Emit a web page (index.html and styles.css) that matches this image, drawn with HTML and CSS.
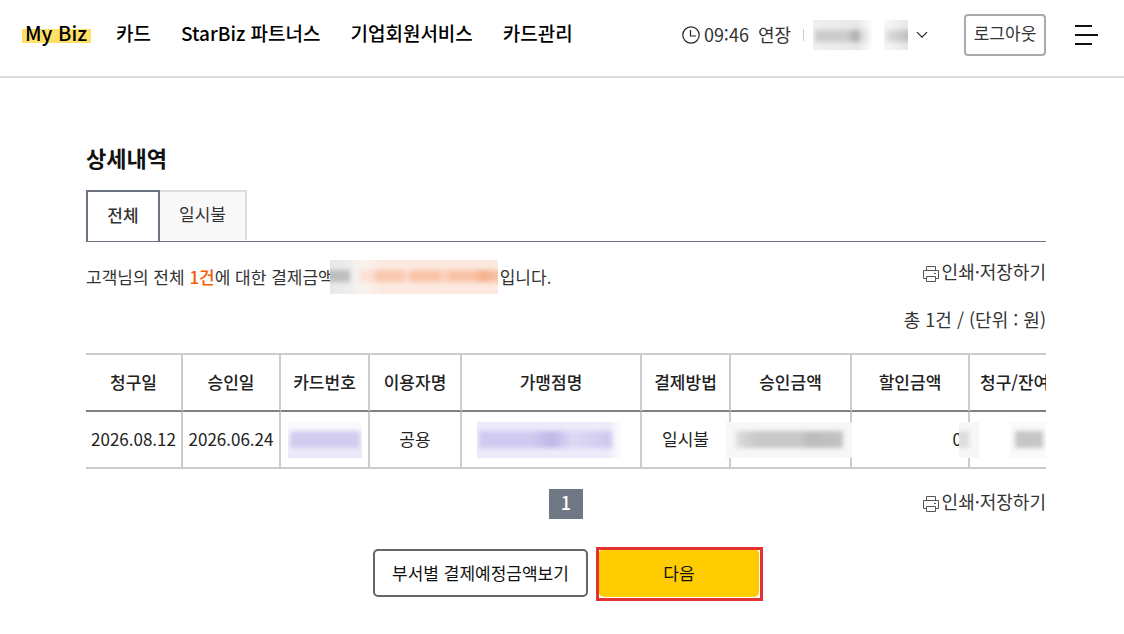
FILE: index.html
```html
<!DOCTYPE html>
<html lang="ko">
<head>
<meta charset="utf-8">
<meta name="viewport" content="width=device-width, initial-scale=1">
<title>상세내역</title>
<link rel="stylesheet" href="styles.css">
</head>
<body>
<header class="header">
  <nav class="nav">
    <a class="nav-link nav-current" href="#">My Biz</a>
    <a class="nav-link" href="#">카드</a>
    <a class="nav-link" href="#">StarBiz 파트너스</a>
    <a class="nav-link" href="#">기업회원서비스</a>
    <a class="nav-link" href="#">카드관리</a>
  </nav>
  <div class="session">
    <svg class="clock" width="18" height="18" viewBox="0 0 18 18" fill="none" stroke="#222" stroke-width="1.2"><circle cx="9" cy="9" r="8.2"/><path d="M8.5 4v6H14"/></svg>
    <span class="time">09:46</span>
    <button class="extend" type="button">연장</button>
    <button class="user" type="button" aria-label="사용자">
      <span class="mask mask-user"><span class="band"></span></span>
      <span class="mask mask-suffix"><span class="band"></span></span>
      <svg width="12" height="8" viewBox="0 0 12 8" fill="none" stroke="#222" stroke-width="1.2"><path d="M1 1.2l5 5 5-5"/></svg>
    </button>
  </div>
  <button class="logout" type="button">로그아웃</button>
  <button class="menu" type="button" aria-label="전체메뉴"><svg width="24" height="22" viewBox="0 0 24 22" stroke="#111" stroke-width="2"><path d="M0 2h17M0 11h23M0 20h17"/></svg></button>
</header>
<main class="main">
  <h2 class="title">상세내역</h2>
  <div class="tabs">
    <button class="tab tab-active" type="button">전체</button>
    <button class="tab" type="button">일시불</button>
  </div>
  <div class="summary">
    <p class="message">고객님의 전체 <strong class="count">1건</strong>에 대한 결제금액<span class="mask mask-amount"><span class="band band-gray"></span><span class="band band-orange"></span></span>입니다.</p>
    <div class="tools">
      <a class="print" href="#"><svg width="18" height="18" viewBox="0 0 18 18" fill="none" stroke="#555"><path d="M4.5 5.5v-4h9v4M4.5 13.500h-3v-8h15v8h-3M4.500 11.500h9v5h-9zM12 8.500h2"/></svg>인쇄·저장하기</a>
      <p class="total">총 1건 / (단위 : 원)</p>
    </div>
  </div>
  <div class="table-wrap">
    <table class="table">
      <colgroup><col class="c-bill"><col class="c-date"><col class="c-card"><col class="c-user"><col class="c-shop"><col class="c-method"><col class="c-amount"><col class="c-sale"><col class="c-rest"></colgroup>
      <thead>
        <tr><th>청구일</th><th>승인일</th><th>카드번호</th><th>이용자명</th><th>가맹점명</th><th>결제방법</th><th>승인금액</th><th>할인금액</th><th class="rest">청구/잔여</th></tr>
      </thead>
      <tbody>
        <tr>
          <td>2026.08.12</td><td>2026.06.24</td>
          <td><span class="mask mask-card"><span class="band"></span></span></td>
          <td>공용</td>
          <td><span class="mask mask-shop"><span class="band"></span></span></td>
          <td>일시불</td>
          <td><span class="mask mask-paid"><span class="band"></span></span></td>
          <td class="num">0<span class="mask mask-sale"><span class="band"></span></span></td>
          <td><span class="mask mask-rest"><span class="band"></span></span></td>
        </tr>
      </tbody>
    </table>
  </div>
  <div class="foot">
    <button class="page" type="button" aria-current="page">1</button>
    <a class="print" href="#"><svg width="18" height="18" viewBox="0 0 18 18" fill="none" stroke="#555"><path d="M4.5 5.5v-4h9v4M4.5 13.500h-3v-8h15v8h-3M4.500 11.500h9v5h-9zM12 8.500h2"/></svg>인쇄·저장하기</a>
  </div>
  <div class="actions">
    <button class="btn" type="button">부서별 결제예정금액보기</button>
    <button class="btn btn-next" type="button">다음</button>
  </div>
</main>
</body>
</html>
```
FILE: styles.css
```css
* { box-sizing: border-box; }
body {
  margin: 0;
  background: #fff;
  color: #333;
  font: 17px/24px "Noto Sans CJK KR", sans-serif;
}
button { padding: 0; border: 0; background: none; color: inherit; font: inherit; }
a { color: inherit; text-decoration: none; }
p, h2 { margin: 0; }
svg { display: block; flex: none; }

.header {
  display: flex;
  align-items: flex-start;
  height: 78px;
  padding: 14px 25px 0 22px;
  border-bottom: 2px solid #ddd;
}
.nav { display: flex; gap: 30px; padding-top: 5px; margin-right: auto; white-space: nowrap; }
.nav-link { color: #000; font-size: 19px; line-height: 28px; font-weight: 500; }
.nav-current {
  padding: 0 4px 0 3px;
  margin-right: -5px;
  background: linear-gradient(#ffe066, #ffe066) 0 10px / 100% 14px no-repeat;
  font-size: 20px;
}
.session { display: flex; align-items: center; height: 42px; font-size: 18px; }
.time, .extend { padding-bottom: 3px; }
.time { margin: 0 9px 0 4px; }
.user { display: flex; align-items: center; height: 30px; margin-left: 12px; }
.user::before { content: ""; width: 1px; height: 12px; margin-right: 9px; background: #ccc; }
.logout {
  width: 82px;
  height: 42px;
  margin-left: 36px;
  padding-bottom: 4px;
  border: 2px solid #aaa;
  border-radius: 4px;
}
.menu { margin: 10px 0 0 29px; }

/* Privacy masks */
.mask { position: relative; display: inline-block; overflow: hidden; }
.band { position: absolute; left: 2px; right: 2px; top: 10px; height: 12px; filter: blur(2px); background: #ccc; }
.mask-user { width: 60px; height: 30px; background: linear-gradient(90deg, #f0f0f0 0, #e8e8e8 75%, #fff 100%); }
.mask-user .band { right: 4px; background: linear-gradient(90deg, #ccc 60%, #aaa 76%, #ddd 88%, #eee); }
.mask-suffix { width: 24px; height: 30px; margin: 0 8px 0 11px; background: linear-gradient(90deg, #f8f8f8, #e8e8e8); }
.mask-suffix .band { left: 2px; right: -4px; background: linear-gradient(90deg, #ddd, #bbb); }
.mask-amount {
  width: 168px;
  height: 34px;
  margin: -4px 2px 0 -4px;
  vertical-align: middle;
  background: linear-gradient(90deg, #e8e8e8 0, #eee 12%, #fbf3ef 20%, #fce9e0 32%, #fce8de 100%);
}
.mask-amount .band-gray { left: -3px; right: 148px; background: #bdbdbd; }
.mask-amount .band-orange {
  left: 30px;
  right: -3px;
  background: linear-gradient(90deg, #fcdfd2 0 12px, #f9c9af 18px 41px, #fbdacb 47px, #f9c3a7 53px 77px, #fbd5c3 85px, #f8c3a6 91px 113px, #f5b08a 123px, #f8c8af);
}

.main { padding: 63px 78px 32px 86px; }
.title { color: #111; font-size: 22px; line-height: 32px; font-weight: 700; }
.tabs { display: flex; margin-top: 17px; border-bottom: 1px solid #6b7280; }
.tab {
  width: 87px;
  height: 50px;
  margin-bottom: 1px;
  padding-bottom: 4px;
  border: 2px solid #ddd;
  border-width: 2px 2px 0 0;
  background: #f8f8f8;
}
.tab-active { width: 74px; height: 51px; margin-bottom: 0; border-color: #6b7280; border-width: 2px 2px 0; background: #fff; font-weight: 500; }

.summary { display: flex; justify-content: space-between; padding-top: 17px; }
.message { line-height: 36px; white-space: nowrap; }
.count { color: #f25c05; font-weight: 500; }
.tools { text-align: right; }
.total { margin-top: 24px; font-size: 18px; }
.print { display: flex; align-items: center; justify-content: flex-end; gap: 2px; font-size: 18px; }
.print svg { margin-top: 5px; }

.table-wrap { margin-top: 22px; overflow: hidden; }
.table { width: calc(100% + 40px); table-layout: fixed; border-spacing: 0; color: #222; text-align: center; }
.table th, .table td { position: relative; height: 57px; padding: 0 0 2px; border-bottom: 2px solid #ccc; border-right: 2px solid #ccc; white-space: nowrap; }
.table th { height: 59px; border-top: 2px solid #ccc; border-bottom-color: #808080; font-weight: 500; }
.table .rest { padding-left: 10px; text-align: left; }
.table .num { padding-right: 6px; text-align: right; }
.c-bill { width: 97px; }
.c-date { width: 98px; }
.c-card { width: 89px; }
.c-user { width: 92px; }
.c-shop { width: 180px; }
.c-method { width: 89px; }
.c-amount { width: 121px; }
.c-sale { width: 118px; }
.table .mask { position: absolute; top: 10px; height: 36px; z-index: 1; }
.table .mask .band { top: 9px; height: 17px; }
.table .mask-card { left: 7px; width: 74px; background: linear-gradient(#faf9fe 0 20%, #e9e6f8); }
.mask-card .band { background: #d2ccef; }
.table .mask-shop { left: 15px; width: 145px; background: linear-gradient(90deg, #edeafa 90%, #fff); }
.mask-shop .band { right: 10px; background: linear-gradient(90deg, #d0c9f0 0 40%, #bfb6e8 55%, #ddd8f4 70%, #cfc8ee); }
.table .mask-paid { left: -5px; width: 126px; background: #f7f7f7; }
.mask-paid .band { left: 10px; right: 9px; background: linear-gradient(90deg, #ddd 0, #c8c8c8 20% 60%, #bbb 70%, #c4c4c4); }
.table .mask-sale { left: 107px; width: 20px; background: #f7f7f7; }
.mask-sale .band { left: -2px; right: 10px; background: #ddd; }
.table .mask-rest { left: 40px; width: 42px; background: #fafafa; }
.mask-rest .band { left: 5px; right: 9px; background: #c6c6c6; }

.foot { display: grid; grid-template-columns: 1fr auto 1fr; align-items: start; margin-top: 20px; }
.page { grid-column: 2; width: 34px; height: 30px; padding-bottom: 4px; background: #6f7785; color: #fff; font-size: 18px; font-weight: 500; }
.actions { display: flex; justify-content: center; gap: 11px; margin-top: 30px; }
.btn { height: 48px; padding: 0 17px; border: 2px solid #666; border-radius: 5px; color: #111; }
.btn-next { position: relative; width: 160px; border: 0; background: #ffcc00; }
.btn-next::after { content: ""; position: absolute; inset: -2px -4px -4px -3px; border: 3px solid #e33030; }
```
